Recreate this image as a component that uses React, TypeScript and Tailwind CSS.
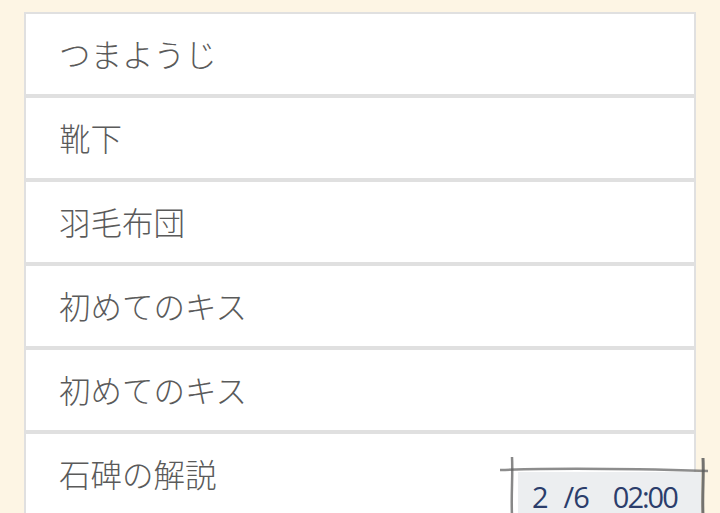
import React from 'react';

const ITEMS = ['つまようじ', '靴下', '羽毛布団', '初めてのキス', '初めてのキス', '石碑の解説'];

// Sketchy frame drawn around the counter
const SketchFrame = () => (
  <svg className="absolute inset-0 pointer-events-none" width="210" height="60" viewBox="0 0 210 60">
    <path d="M0 15 C 60 13, 140 14, 208 16" stroke="#707070" strokeWidth="2.5" fill="none" opacity="0.8" />
    <path d="M12 2 C 13 20, 11 40, 12 60" stroke="#606060" strokeWidth="2.5" fill="none" opacity="0.75" />
    <path d="M203 3 C 204 20, 202 40, 203 60" stroke="#5a5a5a" strokeWidth="3" fill="none" opacity="0.85" />
  </svg>
);

const Counter = () => (
  <div className="absolute left-[500px] top-[455px] w-[210px] h-[60px]">
    <div className="absolute left-[18px] top-[17px] w-[183px] h-[43px] bg-[#eceef0]" />
    <SketchFrame />
    <div className="absolute left-[32px] top-[27px] flex items-baseline text-[29px] leading-none text-[#2b3d6b] font-['Open_Sans',sans-serif]">
      <span>2</span>
      <span className="ml-[15px] tracking-[-1px]">/6</span>
      <span className="ml-[24px] tracking-[-2px]">02:00</span>
    </div>
  </div>
);

export default function App() {
  return (
    <div className="relative w-[720px] h-[513px] overflow-hidden bg-[#fdf5e4]">
      <div className="ml-[24px] mt-[12px] w-[672px] flex flex-col gap-[4px] bg-[#e0e0e0] border-2 border-[#e0e0e0]">
        {ITEMS.map((item, i) => (
          <div
            key={i}
            className="h-[80px] bg-white flex items-center pl-[33px] text-[31.5px] font-light text-[#5a5a5a] font-['Noto_Sans_CJK_JP',sans-serif]"
          >
            {item}
          </div>
        ))}
      </div>
      <Counter />
    </div>
  );
}
